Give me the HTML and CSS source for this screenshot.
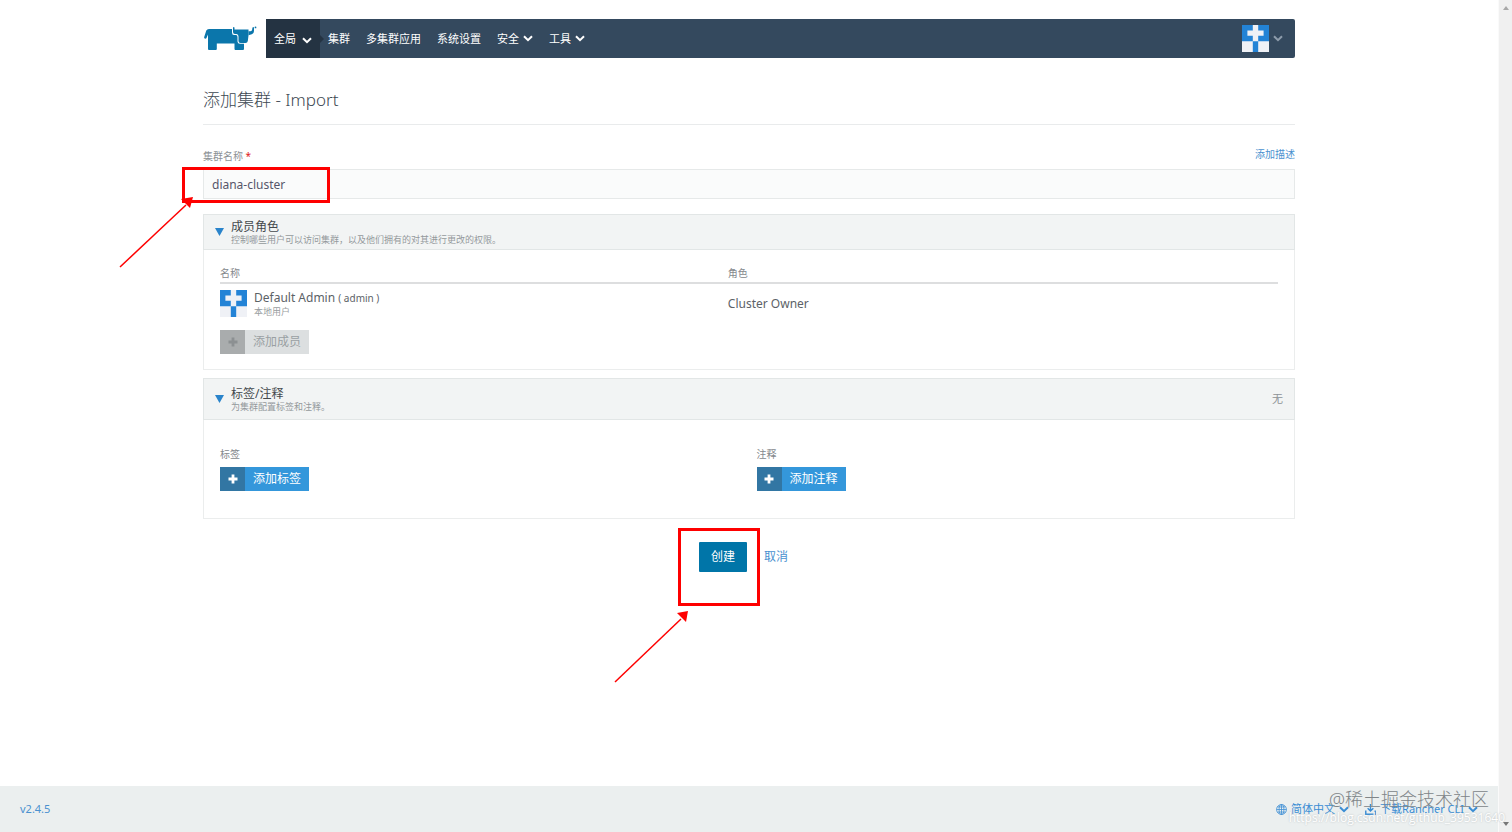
FILE: index.html
```html
<!DOCTYPE html>
<html lang="zh-CN">
<head>
<meta charset="utf-8">
<title>添加集群 - Import</title>
<link rel="stylesheet" href="styles.css">
</head>
<body>
<svg class="defs" aria-hidden="true">
  <symbol id="chevron" viewBox="0 0 10 7"><path d="M1 1.2 5 5.2 9 1.2" fill="none" stroke="currentColor" stroke-width="2"/></symbol>
  <symbol id="plus" viewBox="0 0 10 10"><path d="M3.6 0.5h2.8v3.1h3.1v2.8H6.4v3.1H3.6V6.4H0.5V3.6h3.1z" fill="currentColor"/></symbol>
  <symbol id="avatar" viewBox="0 0 5 5"><path fill="#2383d6" d="M0 0h5v5H0z"/><path fill="#eff1f6" d="M2 0h1v1h1v1H3v1H2V2H1V1h1zM0 3h2v2H0zM3 3h2v2H3z"/></symbol>
</svg>
<div class="shell">
  <div class="page">
    <div class="container">
      <header class="topbar">
        <a class="logo" href="#" aria-label="Rancher">
          <svg viewBox="0 0 54 28" width="54" height="28">
            <g fill="#0b76ab">
              <path d="M6 4H29V7.500Q29 10 31 10H33Q34.500 10 34.500 12V16.500Q34.500 18.800 37 18.800H41V24Q41 25 40 25H32.500Q31.500 25 31.500 24V18.500H13.800V24Q13.800 25 12.800 25H6Q5 25 5 24V9.500L3.500 13Q3 14 1.800 13.500Q.8 13 1.200 12L3.300 5.600Q4 4 6 4z"/>
              <path d="M30 2.600Q30.700 1.200 31.500 2.600V4.600H45.500V10.500L44.800 16Q44.500 18 42.500 18H37.500Q35.500 18 35.500 16V11.500Q35.500 9 33.500 9H32Q30 9 30 7z"/>
              <path d="M45.500 6.300H47.500Q49 6.300 49.200 4.600L49.400 2.800Q50.400 1.400 51 2.800V6Q51 8.600 48.800 9.300L45.500 10.200z"/>
              <circle cx="52.500" cy="2.400" r="0.900"/>
            </g>
          </svg>
        </a>
        <nav class="nav" aria-label="主导航">
          <button class="nav-item scope" type="button">全局 <svg class="chev"><use href="#chevron"/></svg></button>
          <a class="nav-item" href="#">集群</a>
          <a class="nav-item" href="#">多集群应用</a>
          <a class="nav-item" href="#">系统设置</a>
          <button class="nav-item menu" type="button">安全<svg class="chev"><use href="#chevron"/></svg></button>
          <button class="nav-item menu" type="button">工具<svg class="chev"><use href="#chevron"/></svg></button>
          <button class="user" type="button" aria-label="用户菜单"><svg class="avatar"><use href="#avatar"/></svg><svg class="chev thin"><use href="#chevron"/></svg></button>
        </nav>
      </header>

      <main>
        <h1>添加集群 - Import</h1>
        <form>
          <div class="label-row">
            <label for="name">集群名称 <span class="required">*</span></label>
            <a href="#">添加描述</a>
          </div>
          <div class="field">
            <input id="name" type="text" value="diana-cluster">
            <div class="callout callout-name">
              <svg class="arrow" viewBox="0 0 74 74"><path d="M1 71 67 9" stroke="#fe0000" stroke-width="1.500" fill="none"/><path d="M74 1 71 12 62 3z" fill="#fe0000"/></svg>
            </div>
          </div>

          <section class="panel">
            <div class="panel-head">
              <button class="toggle" type="button" aria-label="收起成员角色"></button>
              <div class="panel-title"><h2>成员角色</h2><p>控制哪些用户可以访问集群，以及他们拥有的对其进行更改的权限。</p></div>
            </div>
            <div class="panel-body members">
              <table>
                <thead><tr><th class="col-name">名称</th><th>角色</th></tr></thead>
                <tbody><tr>
                  <td><div class="member"><svg class="avatar"><use href="#avatar"/></svg><div><div class="member-name">Default Admin <small>( admin )</small></div><div class="member-type">本地用户</div></div></div></td>
                  <td>Cluster Owner</td>
                </tr></tbody>
              </table>
              <button class="add" type="button" disabled><span class="add-icon"><svg><use href="#plus"/></svg></span><span class="add-text">添加成员</span></button>
            </div>
          </section>

          <section class="panel">
            <div class="panel-head tall">
              <button class="toggle" type="button" aria-label="收起标签/注释"></button>
              <div class="panel-title"><h2>标签/注释</h2><p>为集群配置标签和注释。</p></div>
              <span class="status">无</span>
            </div>
            <div class="panel-body columns">
              <div><h3>标签</h3><button class="add" type="button"><span class="add-icon"><svg><use href="#plus"/></svg></span><span class="add-text">添加标签</span></button></div>
              <div><h3>注释</h3><button class="add" type="button"><span class="add-icon"><svg><use href="#plus"/></svg></span><span class="add-text">添加注释</span></button></div>
            </div>
          </section>

          <div class="actions">
            <div class="create-wrap">
              <button class="create" type="submit">创建</button>
              <div class="callout callout-create">
                <svg class="arrow" viewBox="0 0 74 74"><path d="M1 72 67 9" stroke="#fe0000" stroke-width="1.500" fill="none"/><path d="M74 1 72 12 63 3z" fill="#fe0000"/></svg>
              </div>
            </div>
            <a class="cancel" href="#">取消</a>
          </div>
        </form>
      </main>
    </div>

    <footer>
      <a href="#">v2.4.5</a>
      <div class="footer-links">
        <button type="button"><svg class="icon" viewBox="0 0 10 10" fill="none" stroke="currentColor" stroke-width="0.700"><circle cx="5" cy="5" r="4.500"/><ellipse cx="5" cy="5" rx="2.200" ry="4.500"/><path d="M5 .5v9M.5 5h9M1.300 2.700h7.400M1.300 7.300h7.400"/></svg>简体中文<svg class="chev"><use href="#chevron"/></svg></button>
        <button type="button"><svg class="icon" viewBox="0 0 10 10" fill="none" stroke="currentColor" stroke-width="1.300"><path d="M5 0v6M2.400 3.800 5 6.400l2.600-2.600M.7 6v3.300h8.600V6"/></svg>下载Rancher CLI<svg class="chev"><use href="#chevron"/></svg></button>
      </div>
      <div class="mark-site">@稀土掘金技术社区</div>
      <div class="mark-url">https://blog.csdn.net/github_39531640</div>
    </footer>
  </div>
  <div class="scrollbar" aria-hidden="true"><svg viewBox="0 0 6 4"><path d="M0 4 3 0l3 4z" fill="#a8a8a8"/></svg><svg viewBox="0 0 6 4"><path d="M0 0h6L3 4z" fill="#777"/></svg></div>
</div>
</body>
</html>
```
FILE: styles.css
```css
* { box-sizing: border-box; }
body {
  margin: 0;
  background: #fff;
  color: #5c6267;
  font: 400 12px/16px "Noto Sans", "Noto Sans CJK SC", sans-serif;
}
button, input { font: inherit; color: inherit; }
button { border: 0; padding: 0; background: none; }
a { color: #4a91cf; text-decoration: none; }
h1, h2, h3, p { margin: 0; font-weight: 400; }
.defs { position: absolute; width: 0; height: 0; }

.shell { display: flex; min-height: 100vh; }
.page { flex: 1; display: flex; flex-direction: column; min-width: 0; }
.container { width: 100%; max-width: 1092px; margin: 0 auto; flex: 1; }
.scrollbar {
  width: 14px;
  border-left: 1px solid #fafafa;
  background: #f0f0f0;
  display: flex;
  flex-direction: column;
  justify-content: space-between;
  align-items: center;
  padding: 6px 0;
}
.scrollbar svg { width: 6px; height: 4px; }

/* Top bar */
.topbar { display: flex; margin-top: 19px; height: 39px; }
.logo { width: 63px; padding-top: 6px; }
.logo svg { display: block; }
.nav {
  flex: 1;
  display: flex;
  background: #34495e;
  border-radius: 0 2px 2px 0;
  color: #fff;
  font-size: 11px;
}
.nav-item { display: flex; align-items: center; padding: 0 8px; color: #fff; }
.nav-item.menu { gap: 4px; }
.nav-item.scope { position: relative; gap: 6px; background: #243342; }
.scope .chev { margin-top: 4px; }
.nav-item.scope::after {
  content: "";
  position: absolute;
  left: 100%;
  top: 16px;
  border: 4px solid transparent;
  border-right-width: 0;
  border-left-color: #243342;
}
.chev { width: 10px; height: 7px; }
.chev.thin { color: #8d9cab; }
.user { display: flex; align-items: center; gap: 4px; margin-left: auto; padding-right: 12px; }
.avatar { width: 27px; height: 27px; }

/* Form */
h1 {
  margin-top: 30px;
  padding-bottom: 12px;
  border-bottom: 1px solid #e9ebec;
  color: #3d4852;
  font-size: 17px;
  font-weight: 300;
  line-height: 24px;
}
.label-row {
  display: flex;
  justify-content: space-between;
  margin-top: 21px;
  padding-bottom: 5px;
  font-size: 10px;
}
.label-row label { padding-top: 2px; color: #8d9296; }
.required { color: #e02020; }
.field { position: relative; }
.field input {
  display: block;
  width: 100%;
  height: 30px;
  padding: 0 8px;
  border: 1px solid #e6e9e9;
  background: #fafbfb;
  color: #56566a;
}
.callout { position: absolute; border: 3px solid #fe0000; pointer-events: none; }
.callout-name { left: -21px; top: -2px; width: 148px; height: 36px; }
.callout-create { left: -21px; top: -14px; width: 82px; height: 78px; }
.arrow { position: absolute; width: 74px; height: 74px; }
.callout-name .arrow { right: 134px; top: 26px; }
.callout-create .arrow { right: 69px; top: 79px; }

.panel { margin-top: 15px; border: 1px solid #ebeded; }
.panel + .panel { margin-top: 8px; }
.panel-head {
  display: flex;
  align-items: center;
  height: 36px;
  margin: -1px -1px 0;
  padding: 0 11px;
  border: 1px solid #e2e6e6;
  background: #f2f4f4;
}
.panel-head.tall { height: 42px; }
.toggle {
  width: 9px;
  height: 8px;
  margin-right: 7px;
  background: #2a84cb;
  clip-path: polygon(0 0, 100% 0, 50% 100%);
}
.panel-title { padding-top: 2px; }
.panel-title h2 { font-size: 12px; line-height: 14px; color: #44494d; }
.panel-title p { font-size: 9px; line-height: 12px; color: #94999c; }
.status { margin-left: auto; font-size: 11px; color: #8d9296; }
.panel-body { padding: 16px; }
.members { padding: 15px 16px; }

table { width: 100%; border-collapse: collapse; table-layout: fixed; }
th {
  padding: 0 0 1px;
  border-bottom: 2px solid #dddedf;
  text-align: left;
  font-size: 10px;
  font-weight: 400;
  color: #85898d;
}
.col-name { width: 48%; }
td { padding: 6px 0; vertical-align: middle; }
.member { display: flex; align-items: center; gap: 7px; }
.member-name { line-height: 15px; }
.member-name small { font-size: 10px; }
.member-type { font-size: 9px; line-height: 11px; color: #999da0; }

.add { display: inline-flex; height: 24px; background: #3497db; color: #fff; vertical-align: top; }
.members .add { margin-top: 7px; }
.columns .add { margin-top: 5px; }
.add-icon { display: grid; place-items: center; width: 25px; height: 100%; background: #3276a3; }
.add-icon svg { width: 10px; height: 10px; }
.add-text { padding: 0 8px; line-height: 24px; }
.add:disabled { background: #dcdfe0; color: #9a9fa3; }
.add:disabled .add-icon { background: #a9acad; color: #8c9092; }

.columns { display: grid; grid-template-columns: 1fr 1fr; gap: 15px; padding: 26px 16px 27px; }
.columns h3 { font-size: 10px; color: #85898d; }

.actions { display: flex; justify-content: center; align-items: center; gap: 6px; margin-top: 23px; }
.create-wrap { position: relative; }
.create { display: block; height: 30px; padding: 0 12px; border-radius: 1px; background: #0075a8; color: #fff; }
.cancel { padding: 0 11px; }

/* Footer */
footer {
  position: relative;
  display: flex;
  align-items: center;
  justify-content: space-between;
  height: 46px;
  padding: 0 20px;
  background: #ebefef;
  font-size: 11px;
}
.footer-links { display: flex; gap: 16px; color: #3a8dd4; }
.footer-links button { display: flex; align-items: center; gap: 4px; }
.icon { width: 11px; height: 11px; }
.mark-site {
  position: absolute;
  right: 9px;
  top: 1px;
  color: #808588;
  font-size: 18px;
  font-weight: 300;
  line-height: 24px;
}
.mark-url {
  position: absolute;
  right: -7px;
  top: 24px;
  color: #fff;
  font: 12px/16px "Open Sans", sans-serif;
  text-shadow: 0 0 2px #b4b9bb;
}
```
